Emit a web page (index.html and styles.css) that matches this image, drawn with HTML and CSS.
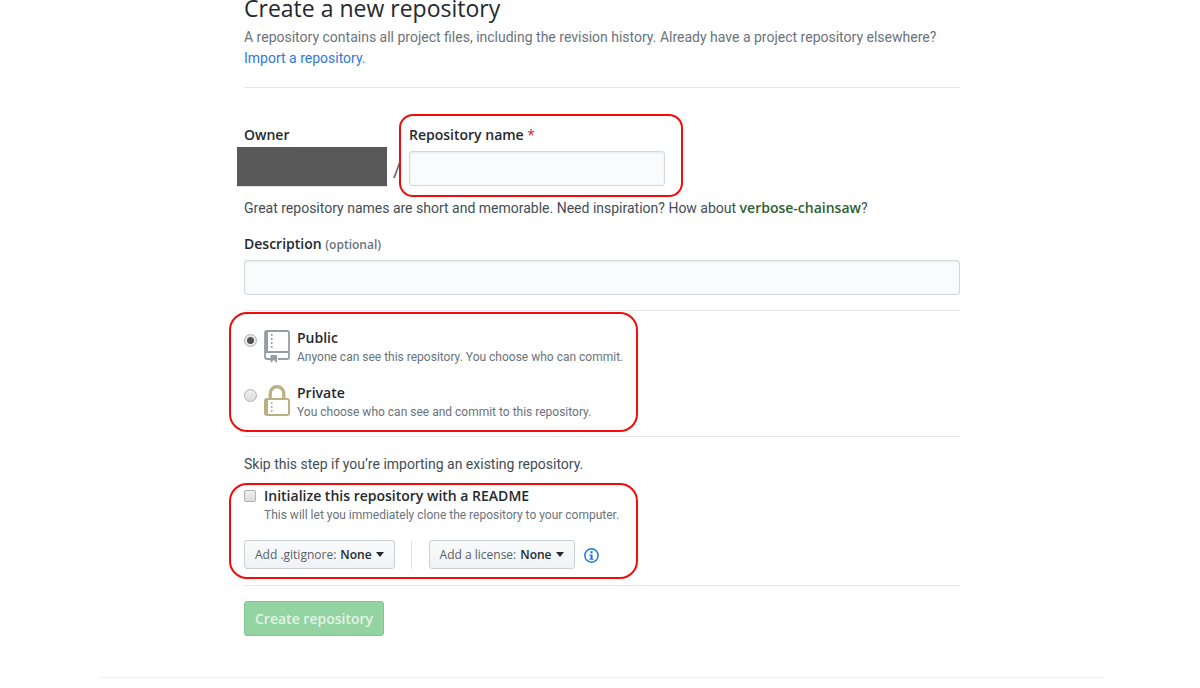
FILE: index.html
```html
<!DOCTYPE html>
<html lang="en">
<head>
<meta charset="utf-8">
<title>Create a new repository</title>
<link rel="stylesheet" href="styles.css">
</head>
<body>
<main class="page">
  <form class="new-repo">
    <header class="intro">
      <h1 class="title">Create a new repository</h1>
      <p class="lead">A repository contains all project files, including the revision history. Already have a project repository elsewhere?<br><a class="link" href="#import">Import a repository.</a></p>
    </header>

    <div class="name-row">
      <div class="owner">
        <span class="label">Owner</span>
        <div class="owner-mask"></div>
      </div>
      <span class="slash">/</span>
      <div class="repo-name marked marked-name">
        <label class="label" for="repo-name">Repository name <span class="required">*</span></label>
        <input class="field" id="repo-name" type="text">
      </div>
    </div>
    <p class="hint">Great repository names are short and memorable. Need inspiration? How about <strong class="suggestion">verbose-chainsaw</strong>?</p>

    <div class="description">
      <label class="label" for="description">Description <span class="optional">(optional)</span></label>
      <input class="field" id="description" type="text">
    </div>

    <div class="visibility">
      <div class="choices marked marked-visibility">
        <div class="choice">
          <input class="radio" type="radio" name="visibility" id="public" checked>
          <svg class="icon" viewBox="0 0 26 34" aria-hidden="true">
            <path fill="none" stroke="#959da5" stroke-width="1.800" d="M7 29H3Q1 29 1 27V3Q1 1 3 1H23Q25 1 25 3V27Q25 29 23 29H14M1 22H25"/>
            <path fill="#959da5" d="M1 1h3v21H1zM7 4h1.500v2H7zM7 8h1.500v2H7zM7 12h1.500v2H7zM7 16h1.500v2H7zM6.500 25h6.500v8l-3.200-3L6.500 33z"/>
          </svg>
          <label class="choice-text" for="public"><span class="choice-name">Public</span><span class="choice-note">Anyone can see this repository. You choose who can commit.</span></label>
        </div>
        <div class="choice">
          <input class="radio" type="radio" name="visibility" id="private">
          <svg class="icon" viewBox="0 0 26 34" aria-hidden="true">
            <path fill="none" stroke="#bbae82" stroke-width="3.200" d="M6.200 14V8.500a6.800 6.800 0 0 1 13.600 0V14"/>
            <path fill="none" stroke="#bbae82" stroke-width="2" d="M3 14H23Q25 14 25 16V28Q25 30 23 30H3Q1 30 1 28V16Q1 14 3 14Z"/>
            <path fill="#bbae82" d="M1 14h3v16H1zM7 17h1.500v2H7zM7 21h1.500v2H7zM7 25h1.500v2H7z"/>
          </svg>
          <label class="choice-text" for="private"><span class="choice-name">Private</span><span class="choice-note">You choose who can see and commit to this repository.</span></label>
        </div>
      </div>
    </div>

    <div class="setup">
      <p class="skip">Skip this step if you’re importing an existing repository.</p>
      <div class="init marked marked-init">
        <div class="readme">
          <input class="check" type="checkbox" id="readme">
          <label class="choice-text" for="readme"><span class="choice-name">Initialize this repository with a README</span><span class="choice-note">This will let you immediately clone the repository to your computer.</span></label>
        </div>
        <div class="menus">
          <button class="menu-button" type="button" aria-haspopup="true">Add .gitignore: <strong class="menu-value">None</strong><span class="caret"></span></button>
          <span class="divider"></span>
          <button class="menu-button" type="button" aria-haspopup="true">Add a license: <strong class="menu-value">None</strong><span class="caret"></span></button>
          <a class="info" href="#license-help" aria-label="About licenses">
            <svg class="info-icon" viewBox="0 0 14 14" aria-hidden="true">
              <circle cx="7" cy="7" r="6.200" fill="none" stroke="#1f76de" stroke-width="1.400"/>
              <path fill="#1f76de" d="M6 3h2v2H6zM5 6h3v4h1v1H5v-1h1V7H5z"/>
            </svg>
          </a>
        </div>
      </div>
    </div>

    <div class="actions">
      <button class="submit" type="submit" disabled>Create repository</button>
    </div>
  </form>
  <footer class="footer"></footer>
</main>
</body>
</html>
```
FILE: styles.css
```css
* {
  box-sizing: border-box;
}

body {
  margin: 0;
  background: #fff;
  color: #24292e;
  font-family: Roboto, "Noto Sans", sans-serif;
  font-size: 14px;
  line-height: 20px;
}

.page {
  max-width: 1006px;
  margin: 0 auto;
  padding-left: 4px;
}

.new-repo {
  max-width: 716px;
  margin: 0 auto;
}

.intro {
  padding-bottom: 18px;
  border-bottom: 1px solid #e4e6e8;
}

.title {
  margin: -8px 0 3px;
  font-family: "Open Sans", "Noto Sans", sans-serif;
  font-size: 23px;
  font-weight: 400;
  line-height: 32px;
}

.lead {
  margin: 0;
  color: #6a737d;
  line-height: 21px;
}

.link {
  color: #2f77db;
  text-decoration: none;
}

.name-row {
  display: flex;
  align-items: flex-end;
  margin-top: 37px;
}

.label,
.choice-name {
  display: block;
  font-family: "Open Sans", "Noto Sans", sans-serif;
  font-weight: 600;
}

.owner {
  width: 143px;
}

.owner .label {
  margin-bottom: 2px;
}

.owner-mask {
  height: 39px;
  margin-left: -7px;
  background: #595959;
  box-shadow: 0 1px 1px #dfe2e5;
}

.slash {
  width: 22px;
  padding-left: 6px;
  color: #586069;
  font-size: 20px;
  line-height: 32px;
}

.repo-name {
  width: 256px;
}

.repo-name .label {
  margin-bottom: 6px;
}

.description .label {
  margin-bottom: 5px;
}

.required {
  color: #cb2431;
  font-weight: 400;
}

.field {
  display: block;
  width: 100%;
  height: 35px;
  padding: 6px 8px;
  border: 1px solid #d4d8dc;
  border-radius: 3px;
  background: #fafbfc;
  box-shadow: inset 0 1px 2px rgba(27, 31, 35, 0.08);
  font: inherit;
}

.hint {
  margin: 12px 0 16px;
  color: #444d56;
}

.suggestion {
  color: #2f5f2f;
  font-family: "Open Sans", "Noto Sans", sans-serif;
  font-weight: 600;
}

.optional {
  color: #6a737d;
  font-size: 12px;
}

.visibility {
  margin-top: 15px;
  padding: 17px 0 14px;
  border-top: 1px solid #e4e6e8;
  border-bottom: 1px solid #e4e6e8;
}

.choices {
  display: grid;
  gap: 16px;
  width: 394px;
}

.choice {
  display: flex;
  align-items: flex-start;
}

.radio,
.check {
  flex: none;
  width: 13px;
  height: 13px;
  margin: 6px 7px 0 0;
  border: 1px solid #b0b0b0;
  background: linear-gradient(#f0f0f0, #dcdcdc);
  appearance: none;
}

.radio {
  border-radius: 50%;
}

.radio:checked {
  background: radial-gradient(circle, #505050 0 3px, #e8e8e8 4px);
}

.check {
  width: 12px;
  height: 12px;
  margin: 4px 8px 0 0;
  border-radius: 2px;
}

.icon {
  flex: none;
  width: 26px;
  height: 34px;
  margin: 2px 7px 0 0;
}

.choice-note {
  display: block;
  color: #6a737d;
  font-size: 12px;
  line-height: 19px;
}

.setup {
  padding-bottom: 16px;
  border-bottom: 1px solid #e4e6e8;
}

.skip {
  margin: 17px 0 12px;
  color: #444d56;
}

.init {
  width: 394px;
}

.readme {
  display: flex;
  align-items: flex-start;
}

.menus {
  display: flex;
  align-items: center;
  margin-top: 15px;
}

.menu-button {
  display: flex;
  align-items: center;
  gap: 4px;
  height: 29px;
  padding: 0 10px;
  border: 1px solid #cdd0d3;
  border-radius: 3px;
  background: linear-gradient(#fafbfc, #eff3f6);
  color: #586069;
  font: 12px "Open Sans", "Noto Sans", sans-serif;
  white-space: nowrap;
}

.menu-value {
  color: #24292e;
  font-weight: 600;
}

.caret {
  border: 4px solid transparent;
  border-top: 5px solid #24292e;
  border-bottom: 0;
}

.divider {
  width: 1px;
  height: 28px;
  margin: 0 17px 0 16px;
  background: #dfe2e5;
}

.info {
  display: flex;
  margin: 2px 0 0 9px;
}

.info-icon {
  width: 15px;
  height: 15px;
}

.actions {
  padding: 15px 0 41px;
}

.submit {
  height: 35px;
  padding: 0 10px;
  border: 1px solid #83c594;
  border-radius: 3px;
  background: #94d3a2;
  color: #e1f3e5;
  font: 600 14px "Open Sans", "Noto Sans", sans-serif;
}

.footer {
  border-top: 1px solid #eff0f1;
}

/* Red outlines drawn around the steps being explained */
.marked {
  position: relative;
}

.marked::after {
  content: "";
  position: absolute;
  border: 2px solid #f60b0b;
  border-radius: 18px;
  pointer-events: none;
}

.marked-name::after {
  inset: -11px -18px -11px -10px;
  border-radius: 14px;
}

.marked-visibility::after {
  inset: -16px 0 -10px -15px;
}

.marked-init::after {
  inset: -3px 0 -10px -15px;
}
```
